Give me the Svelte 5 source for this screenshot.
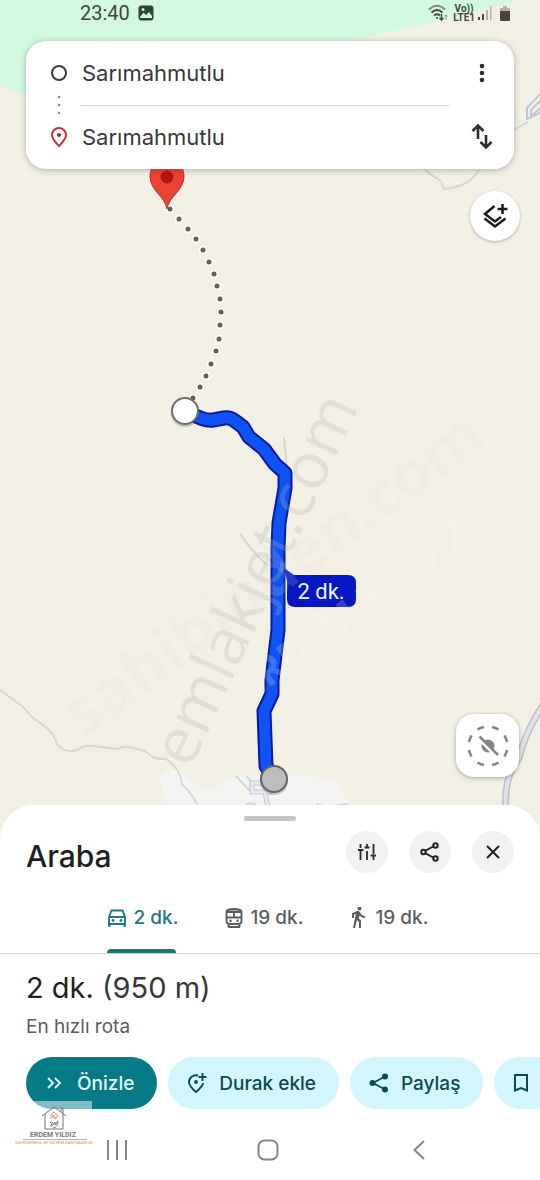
<script>
  const place = 'Sarımahmutlu';

  const walkDots = [
    [170, 209], [179, 219], [188, 229], [196, 239], [203, 250], [209, 262],
    [214, 274], [217, 286], [220, 299], [221, 312], [220, 325], [219, 339],
    [216, 351], [211, 364], [206, 376], [200, 387], [193, 398]
  ];

  const route =
    'M185 411L198 417Q207 421 213 420L224 418Q230 417 235 421L243 427L249 437L264 449L275 464L285 473L285 488L279 523L278 548V630L272 680V694L264 711L266 766L274 779';

  const modes = [
    { id: 'car', time: '2 dk.', label: 'Araba' },
    { id: 'train', time: '19 dk.', label: 'Toplu taşıma' },
    { id: 'walk', time: '19 dk.', label: 'Yürüyüş' }
  ];
  let active = $state('car');
</script>

<div class="screen">
  <section class="map">
    <svg class="canvas" viewBox="0 0 540 839" preserveAspectRatio="xMidYMax slice" aria-hidden="true">
      <rect width="540" height="839" fill="#f2f0e4" />
      <path d="M0 0H520L440 21L347 41L220 100H40L0 86Z" fill="#d2f8df" />
      <path d="M160 777Q172 764 186 776T206 792L232 777Q300 772 334 780Q345 790 348 806V839H190Q160 800 160 777Z" fill="#f3f3f1" />
      <g fill="none" stroke="#d6d7db" stroke-width="2">
        <path d="M0 690L22 706L32 717L48 729Q55 736 57 744Q65 754 77 750Q84 745 93 746L118 749Q124 745 133 748L145 751Q153 760 166 759Q180 768 182 784Q193 795 198 806" />
        <path d="M424 169Q432 176 441 181L444 189Q469 187 479 170" />
        <path d="M514 130L528 122" />
        <path d="M284 437L287 470M240 533Q250 550 268 566" />
        <path d="M236 776L249 790L252 783L262 785M246 776L252 782M244 806Q250 801 256 805M316 804Q324 807 332 806L348 804" />
      </g>
      <path d="M542 92L527 108V119L542 112M542 99L531 110V116L542 107" fill="none" stroke="#c3c6da" stroke-width="2" />
      <path d="M252 783H270V792H252ZM265 792L268 808" fill="none" stroke="#c3c9d6" stroke-width="5" />
      <path d="M252 783H270V792H252ZM265 792L268 808" fill="none" stroke="#e5e9f2" stroke-width="3" />
      <path d="M546 700Q526 730 519 758Q503 778 506 812" fill="none" stroke="#bcc0ca" stroke-width="7" />
      <path d="M546 700Q526 730 519 758Q503 778 506 812" fill="none" stroke="#e0e2e8" stroke-width="4" />

      {#each walkDots as [x, y]}
        <circle cx={x} cy={y} r="4" fill="#fff" />
        <circle cx={x} cy={y} r="2.500" fill="#605f5c" />
      {/each}
      <path d="M167 209C165 196 150 191 150 176A17 17 0 0 1 184 176C184 191 169 196 167 209Z" fill="#ea4335" stroke="#b3312a" />
      <circle cx="167" cy="177" r="6.500" fill="#b31412" />

      <path d={route} fill="none" stroke="#0a1a9e" stroke-width="15" stroke-linejoin="round" />
      <path d={route} fill="none" stroke="#0f53f5" stroke-width="11" stroke-linejoin="round" />
      <circle cx="185" cy="413" r="14" fill="#000" opacity=".18" />
      <circle cx="185" cy="411" r="13" fill="#fff" stroke="#6f6f6f" stroke-width="2" />
      <circle cx="274" cy="781" r="14" fill="#000" opacity=".18" />
      <circle cx="274" cy="779" r="13" fill="#bdbdbd" stroke="#666" stroke-width="2" />

      <path d="M284 568L294 575H348Q356 575 356 583V599Q356 607 348 607H295Q287 607 287 599V581Z" fill="#0717c2" />
      <text class="eta" x="321" y="599" text-anchor="middle">2 dk.</text>

      <g class="marks">
        <text class="mark-site" transform="translate(190 770) rotate(-65)">emlakjet.com</text>
        <text class="mark-bold" transform="translate(84 738) rotate(-36)">sahibinden.com</text>
        <text class="mark-name" transform="translate(250 702) rotate(-36)">ERDEM YILDIZ</text>
      </g>
    </svg>

    <header class="status">
      <span class="clock">23:40</span>
      <svg width="16" height="16" viewBox="0 0 16 16" aria-hidden="true">
        <rect x="0.500" y="0.500" width="15" height="15" rx="3" fill="#2f4438" />
        <path d="M2 12L5.500 7.500L8 10L11 7L14 11V13H2Z" fill="#d2f8df" />
        <circle cx="5" cy="4.500" r="1.500" fill="#d2f8df" />
      </svg>
      <span class="grow"></span>
      <svg width="20" height="18" viewBox="0 0 20 18" fill="none" stroke="#44463f" stroke-width="1.800" aria-hidden="true">
        <path d="M1 5.500Q9 -2 17 5.500" opacity=".6" />
        <path d="M3.500 8.500Q9 3.500 14.500 8.500M6 11.500Q9 9 12 11.500" />
        <circle cx="9" cy="14" r="1" fill="#44463f" stroke="none" />
        <path d="M13.500 10V16M11.500 14L13.500 16L15.500 14" stroke-width="1.500" />
        <path d="M18 16V11M16.500 12.500L18 11L19.500 12.500" stroke-width="1" opacity=".5" />
      </svg>
      <span class="volte"><span>Vo))</span><span>LTE1</span></span>
      <svg width="14" height="16" viewBox="0 0 14 16" aria-hidden="true">
        <path d="M0 12H2V15H0ZM4 9H6V15H4Z" fill="#44463f" />
        <path d="M8 5H10V15H8ZM12 1H13.500V15H12Z" fill="#b3b2a8" />
      </svg>
      <svg width="12" height="17" viewBox="0 0 12 17" aria-hidden="true">
        <path d="M1 6V4Q1 3 2 3H4V1H8V3H10Q11 3 11 4V6Z" fill="#b3b0a6" />
        <path d="M1 6H11V15Q11 16 10 16H2Q1 16 1 15Z" fill="#46443f" />
      </svg>
    </header>

    <div class="card">
      <div class="fields">
        <svg class="lead" width="18" height="18" viewBox="0 0 18 18" aria-hidden="true"><circle cx="9" cy="9" r="7" fill="none" stroke="#3c3c3e" stroke-width="2" /></svg>
        <input aria-label="Başlangıç noktası" value={place} />
        <button class="plain" aria-label="Diğer seçenekler">
          <svg width="24" height="24" viewBox="0 0 24 24" fill="#2d2e30"><circle cx="12" cy="5" r="2.300" /><circle cx="12" cy="12" r="2.300" /><circle cx="12" cy="19" r="2.300" /></svg>
        </button>
        <svg class="lead" width="4" height="20" viewBox="0 0 4 20" fill="#8b8b8b" aria-hidden="true"><circle cx="2" cy="2" r="1.300" /><circle cx="2" cy="10" r="1.300" /><circle cx="2" cy="18" r="1.300" /></svg>
        <hr />
        <span></span>
        <svg class="lead" width="18" height="22" viewBox="0 0 18 22" aria-hidden="true">
          <path d="M9 20Q2 13 2 9A7 7 0 0 1 16 9Q16 13 9 20Z" fill="none" stroke="#b83a3a" stroke-width="2" />
          <circle cx="9" cy="9" r="2" fill="#8f2a2a" />
        </svg>
        <input aria-label="Varış noktası" value={place} />
        <button class="plain" aria-label="Başlangıç ve varışı değiştir">
          <svg width="24" height="28" viewBox="0 0 24 28" fill="none" stroke="#2d2e30" stroke-width="2.600"><path d="M8 16V3M2.500 8L8 2.500L13.500 8M16 12V24M10.500 19L16 24.500L21.500 19" /></svg>
        </button>
      </div>
    </div>

    <button class="layers" aria-label="Katmanlar">
      <svg width="28" height="28" viewBox="0 0 28 28" fill="none" stroke="#1c1c1e" stroke-width="2.500">
        <path d="M13.500 4L4 12L14 19.500L20 15M3.500 16.500L14 24.500L24.500 16.500M21.500 2V12M16.500 7H26.500" />
      </svg>
    </button>

    <span class="grow"></span>

    <button class="live" aria-label="Canlı görünüm kapalı">
      <svg width="44" height="44" viewBox="0 0 44 44" fill="none" stroke="#858585" stroke-width="2.500">
        <circle cx="22" cy="22" r="19.500" pathLength="80" stroke-dasharray="4.500 5.500" stroke-dashoffset="-2.750" />
        <circle cx="22" cy="22" r="6.500" fill="#858585" stroke="none" />
        <path d="M12 14L31 33" stroke="#fff" stroke-width="3" />
        <path d="M13.500 12.500L32 31" />
      </svg>
    </button>
  </section>

  <main class="sheet">
    <div class="handle"></div>
    <div class="head">
      <h1>Araba</h1>
      <button class="round" aria-label="Rota seçenekleri">
        <svg width="20" height="20" viewBox="0 0 20 20" fill="none" stroke="#2b2b2d" stroke-width="1.800">
          <path d="M3.500 2V6M1 8H6.500M3.500 8V18M10 2V6M7.500 5.500H12.500M10 9V18M16.500 2V12M13.500 13.500H19M16.500 14V18" />
        </svg>
      </button>
      <button class="round" aria-label="Paylaş">
        <svg width="20" height="20" viewBox="0 0 20 20" fill="none" stroke="#222224" stroke-width="2">
          <path d="M5 9L14 4M5 11L14 16" /><circle cx="3.500" cy="10" r="2.200" /><circle cx="15.500" cy="3.500" r="2.200" /><circle cx="15.500" cy="16.500" r="2.200" />
        </svg>
      </button>
      <button class="round" aria-label="Kapat">
        <svg width="20" height="20" viewBox="0 0 20 20" stroke="#222224" stroke-width="2"><path d="M4 4L16 16M16 4L4 16" /></svg>
      </button>
    </div>

    <nav class="tabs" aria-label="Ulaşım türü">
      {#each modes as m}
        <button class="tab" class:on={active === m.id} aria-label="{m.label} {m.time}" onclick={() => (active = m.id)}>
          <svg width="20" height="22" viewBox="0 0 20 22" aria-hidden="true">
            {#if m.id === 'car'}
              <path d="M2 10L4.500 3.500H15.500L18 10V19M2 10V19M2 10H18M2 17H18M2.500 17V20M17.500 17V20" fill="none" stroke="currentColor" stroke-width="1.900" />
              <circle cx="6" cy="13.500" r="1.400" fill="currentColor" /><circle cx="14" cy="13.500" r="1.400" fill="currentColor" />
            {:else if m.id === 'train'}
              <path d="M2.500 5Q2.500 2 10 2T17.500 5V14Q17.500 17 14.500 17H5.500Q2.500 17 2.500 14ZM2.500 5H17.500M2.500 10.500H17.500M10 4V10.500M4 20H16M5.500 17L4 20M14.500 17L16 20" fill="none" stroke="currentColor" stroke-width="1.900" />
              <path d="M3 3.500H17V5H3Z" fill="currentColor" />
              <circle cx="6.500" cy="13.800" r="1.200" fill="currentColor" /><circle cx="13.500" cy="13.800" r="1.200" fill="currentColor" />
            {:else}
              <g transform="translate(-3 -2)" fill="currentColor">
                <path d="M13.500 5.500c1.100 0 2-.9 2-2s-.9-2-2-2-2 .9-2 2 .9 2 2 2zM9.800 8.900L7 23h2.100l1.800-8 2.100 2v6h2v-7.500l-2.100-2 .6-3C14.800 12 16.800 13 19 13v-2c-1.900 0-3.500-1-4.300-2.400l-1-1.600c-.4-.6-1-1-1.700-1-.3 0-.5.1-.8.100L6 8.300V13h2V9.600l1.800-.7" />
              </g>
            {/if}
          </svg>
          <span>{m.time}</span>
        </button>
      {/each}
    </nav>

    <section class="summary">
      <h2>2 dk. <span>(950 m)</span></h2>
      <p>En hızlı rota</p>
    </section>

    <div class="actions">
      <button class="pill primary">
        <svg width="20" height="20" viewBox="0 0 20 20" fill="none" stroke="currentColor" stroke-width="1.900"><path d="M3 5L8 10L3 15M10 5L15 10L10 15" /></svg>
        Önizle
      </button>
      <button class="pill">
        <svg width="20" height="22" viewBox="0 0 20 22" fill="none" stroke="currentColor" stroke-width="1.900">
          <path d="M11 3.500A7 7 0 0 0 2 10Q2 14 9 20Q16 14 16 11M15.500 1V9M11.500 5H19.500" /><circle cx="9" cy="10" r="1.900" fill="currentColor" stroke="none" />
        </svg>
        Durak ekle
      </button>
      <button class="pill">
        <svg width="20" height="20" viewBox="0 0 20 20" fill="currentColor"><path d="M4 10L16 3.500M4 10L16 16.500" stroke="currentColor" stroke-width="1.900" /><circle cx="3.500" cy="10" r="3" /><circle cx="16" cy="3.500" r="3" /><circle cx="16" cy="16.500" r="3" /></svg>
        Paylaş
      </button>
      <button class="pill" aria-label="Kaydet">
        <svg width="20" height="20" viewBox="0 0 20 20" fill="none" stroke="currentColor" stroke-width="2"><path d="M2 2H14V17.500L8 15L2 17.500Z" /></svg>
        <span class="tail"></span>
      </button>
    </div>

    <footer class="sysnav">
      <button class="plain" aria-label="Son uygulamalar">
        <svg width="24" height="24" viewBox="0 0 24 24" stroke="#858585" stroke-width="2"><path d="M3 2V22M12 2V22M21 2V22" /></svg>
      </button>
      <button class="plain" aria-label="Ana ekran">
        <svg width="24" height="24" viewBox="0 0 24 24" fill="none" stroke="#858585" stroke-width="2"><rect x="2.500" y="2.500" width="19" height="19" rx="6" /></svg>
      </button>
      <button class="plain" aria-label="Geri">
        <svg width="24" height="24" viewBox="0 0 24 24" fill="none" stroke="#858585" stroke-width="2"><path d="M17 3L7.500 12L17 21" /></svg>
      </button>
    </footer>

    <svg class="brand" width="88" height="46" viewBox="-6 0 88 46" aria-hidden="true">
      <rect x="14" y="0" width="61" height="9" fill="#fff" opacity=".5" />
      <g fill="none" stroke="#77777c" stroke-width="1">
        <path d="M25 15L37 6L49 15M28 13V28H46V13M44 11V7H46V13" />
        <path d="M33 22Q36 19 35 23Q32 27 36 24L38 21L38 24L41 20Q41 26 36 27" />
      </g>
      <path d="M33 15L37 11L41 15M33 18L36 14L38 18L41 15M34 16H40" fill="none" stroke="#e39a6d" />
      <text x="36" y="36" text-anchor="middle" class="brand-name">ERDEM YILDIZ</text>
      <path d="M6 38.500H70" stroke="#b9b5b3" stroke-width="1" />
      <text x="37" y="43" text-anchor="middle" class="brand-sub">GAYRİMENKUL VE YATIRIM DANIŞMANLIĞI</text>
    </svg>
  </main>
</div>

<style>
  :global(body) { margin: 0; background: #fff; }
  * { box-sizing: border-box; }
  button { font: inherit; color: inherit; border: 0; padding: 0; margin: 0; cursor: pointer; display: flex; align-items: center; justify-content: center; }
  svg { flex: none; display: block; }
  .screen { min-height: 100vh; display: flex; flex-direction: column; font-family: Inter, Roboto, sans-serif; color: #202124; overflow: hidden; }
  .grow { flex: 1; }

  .map { position: relative; isolation: isolate; flex: 1; display: flex; flex-direction: column; padding-bottom: 62px; }
  .canvas { position: absolute; inset: 0; width: 100%; height: 100%; z-index: -1; }
  .eta { font: 400 22px Roboto, sans-serif; fill: #f0f3ff; }
  .mark-site { font: 400 64px "Open Sans", sans-serif; fill: #b4b4b0; opacity: .26; }
  .mark-bold { font: 700 63px "Open Sans", sans-serif; fill: #e6ddd8; opacity: .16; }
  .mark-name { font: 700 40px "Open Sans", sans-serif; fill: #fff; opacity: .18; }

  .status { display: flex; align-items: center; height: 26px; padding: 0 29px 0 80px; color: #3c4a42; font-family: Roboto, sans-serif; }
  .clock { font-size: 20px; line-height: 26px; margin-right: 8px; }
  .volte { display: flex; flex-direction: column; align-items: center; font-size: 10px; line-height: 9px; font-weight: 700; margin: 0 3px 0 5px; color: #44463f; }
  .status svg + svg { margin-left: 7px; }

  .card { margin: 15px 26px 0; background: #fff; border-radius: 20px; box-shadow: 0 1px 6px rgba(60, 60, 50, .35); }
  .fields { display: grid; grid-template-columns: 18px 1fr 24px; column-gap: 20px; grid-template-rows: 64px 0 64px; align-items: center; padding: 0 20px 0 24px; }
  .lead { justify-self: center; }
  input { width: 100%; min-width: 0; border: 0; outline: 0; padding: 0; background: transparent; font: 400 22px Inter, sans-serif; color: #37383b; margin-left: -6px; }
  hr { border: 0; border-top: 1px solid #d2d2d4; margin: 0 0 0 -7px; width: calc(100% + 6px); }
  .plain { background: none; }

  .layers { align-self: flex-end; width: 50px; height: 50px; margin: 22px 20px 0 0; border-radius: 50%; background: #fff; box-shadow: 0 1px 3px rgba(60, 60, 50, .35); }
  .live { align-self: flex-end; width: 63px; height: 63px; margin-right: 21px; border-radius: 18px; background: #fff; box-shadow: 0 1px 4px rgba(60, 60, 50, .4); }

  .sheet { position: relative; margin-top: -34px; background: #fff; border-radius: 34px 34px 0 0; padding-top: 11px; }
  .handle { width: 52px; height: 5px; border-radius: 2px; background: #c5c5c5; margin: 0 auto; }
  .head { display: flex; align-items: center; gap: 21px; padding: 10px 26px 0; }
  h1 { flex: 1; margin: 0; padding-top: 8px; font-size: 30px; line-height: 34px; font-weight: 500; color: #1f1f21; }
  .round { width: 42px; height: 42px; border-radius: 50%; background: #f1f1f1; }

  .tabs { display: flex; justify-content: center; gap: 46px; padding: 9px 4px 0 0; border-bottom: 1px solid #cfcfcf; }
  .tab { position: relative; height: 71px; gap: 6px; background: none; font-size: 19px; color: #5c5d60; font-weight: 500; }
  .on { color: #1d7a80; }
  .on::after { content: ""; position: absolute; left: 0; right: 2px; bottom: 0; height: 4px; border-radius: 4px 4px 0 0; background: #227378; }

  .summary { padding: 16px 26px 0; }
  h2 { margin: 0; font-size: 29px; line-height: 36px; font-weight: 400; color: #1f1f21; }
  h2 span { color: #37383b; }
  p { margin: 9px 0 0; font-size: 19px; line-height: 24px; color: #5c5d60; }

  .actions { display: flex; gap: 11px; padding: 18px 0 0 26px; overflow: hidden; }
  .pill { flex: none; height: 52px; gap: 12px; padding: 0 23px 0 19px; border-radius: 26px; background: #d3f6fe; color: #0b4a50; font-size: 19px; font-weight: 500; white-space: nowrap; }
  .primary { background: #067a86; color: #e6fbff; }
  .tail { width: 60px; }

  .sysnav { display: flex; justify-content: center; gap: 127px; padding: 29px 4px 18px 0; }
  .brand { position: absolute; left: 11px; bottom: 33px; }
  .brand-name { font: 700 7px Roboto, sans-serif; fill: #77777c; }
  .brand-sub { font: 400 4px Roboto, sans-serif; fill: #e08a4e; }
</style>
